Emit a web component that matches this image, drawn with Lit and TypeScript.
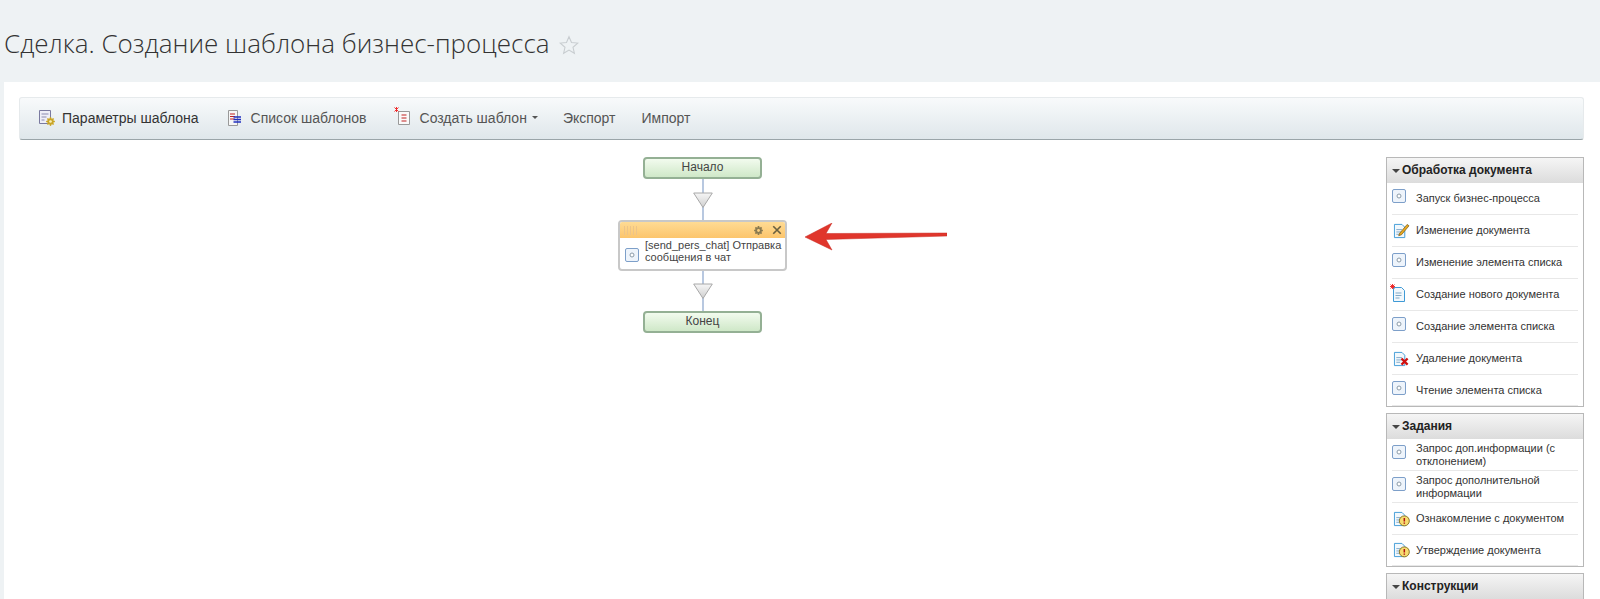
import { LitElement, html, css, svg } from "lit";
import { customElement } from "lit/decorators.js";

const activity = html`<svg class="ic act-ic" viewBox="0 0 14 14"><rect x=".5" y=".5" width="13" height="13" rx="1.5" fill="#eef4fb" stroke="#7d9fc9"/><circle cx="7" cy="7" r="2" fill="#fff" stroke="#8a9aa8"/></svg>`;
const docBase = svg`<path d="M1.500 1.500h8l3 3v11h-11z" fill="#f2f8fc" stroke="#3f9ad6"/><path d="M3.500 7h6M3.500 9.500h6M3.500 12h4" stroke="#7fa9c8"/>`;
const gearPath = (cx: number, cy: number, r: number, w: number, color: string, hole: string) => {
  const teeth = [0, 45, 90, 135].map(
    (a) => svg`<line x1=${cx - r - 1.2} y1=${cy} x2=${cx + r + 1.2} y2=${cy} stroke=${color} stroke-width=${w} transform="rotate(${a} ${cx} ${cy})"/>`
  );
  return svg`${teeth}<circle cx=${cx} cy=${cy} r=${r} fill=${color}/><circle cx=${cx} cy=${cy} r=${r * 0.42} fill=${hole}/>`;
};
const edit = html`<svg class="ic doc" viewBox="0 0 18 17">${docBase}<path d="M7 11l8-9.500 2 1.500-8 9.500-3 1z" fill="#e9a820" stroke="#6e5210" stroke-width=".7"/></svg>`;
const create = html`<svg class="ic doc star-doc" viewBox="0 0 18 18"><g transform="translate(2 2)">${docBase}</g><path d="M.5 .5l4 4M4.500 .5l-4 4M2.500 0v5M0 2.500h5" stroke="#ee1c1c" stroke-width=".9"/></svg>`;
const del = html`<svg class="ic doc" viewBox="0 0 18 17">${docBase}<path d="M9 8l6.500 6.500M15.500 8L9 14.500" stroke="#d01010" stroke-width="2.400"/></svg>`;
const warn = html`<svg class="ic doc" viewBox="0 0 18 17">${docBase}<circle cx="12" cy="10.500" r="5.300" fill="#f7dc70" stroke="#857020"/><path d="M12 7.500v3.700M12 12.300v1.300" stroke="#b01010" stroke-width="1.600"/></svg>`;

@customElement("app-root")
export class AppRoot extends LitElement {
  static styles = css`
    :host { display: block; height: 599px; overflow: hidden; background: #eef2f4; font-family: "Liberation Sans", Arial, sans-serif; color: #222; }
    .title { height: 82px; box-sizing: border-box; padding: 24px 0 0 4px; display: flex; align-items: flex-start; gap: 9px; font: 300 26px/38px "Open Sans", sans-serif; color: #333; }
    .star { width: 20px; height: 20px; margin-top: 11px; }
    .panel { margin-left: 4px; background: #fff; height: 517px; padding: 15px 16px 0 15px; }
    .toolbar { height: 43px; box-sizing: border-box; border: 1px solid #e6eaec; border-bottom: 1px solid #9aa5a9; border-radius: 3px; background: linear-gradient(#f8fafb, #dfe7eb); display: flex; align-items: center; padding: 0 0 2px 18px; font-size: 14px; color: #555; }
    .tb { display: flex; align-items: center; gap: 9px; margin-right: 27px; white-space: nowrap; }
    .tb.first { color: #333; gap: 6px; margin-right: 28px; }
    .tb.make { margin-right: 25px; }
    .tb.exp { margin-right: 26px; }
    .tb svg { width: 18px; height: 18px; }
    .tb .narrow { width: 15px; }
    .tb .mid { width: 17px; margin-top: -3px; }
    .caret { width: 0; height: 0; border: 3px solid transparent; border-top-color: #555; border-bottom: 0; margin-left: -4px; }
    .main { display: flex; padding-top: 17px; }
    .canvas { flex: 1; display: flex; flex-direction: column; align-items: center; font-size: 12px; }
    .flow { display: flex; flex-direction: column; align-items: center; }
    .node { width: 119px; height: 22px; box-sizing: border-box; border: 2px solid #94b094; border-radius: 4px; background: linear-gradient(#f2fbee, #cfe8c8); text-align: center; line-height: 17px; color: #444; font-size: 12px; }
    .link { width: 20px; display: block; }
    .act-wrap { position: relative; }
    .act { width: 169px; height: 51px; box-sizing: border-box; border: 2px solid #c8c8c8; border-radius: 4px; background: #fff; overflow: hidden; }
    .act-h { height: 16px; background: linear-gradient(#ffdb94, #fcc56c); display: flex; align-items: center; gap: 8px; padding: 0 3px 0 4px; }
    .act-h svg { width: 11px; height: 11px; }
    .act-h .close { width: 10px; height: 10px; }
    .grip { width: 15px; height: 9px; background: repeating-linear-gradient(90deg, #edc488 0 1px, transparent 1px 3px); margin-right: auto; }
    .act-b { display: flex; align-items: flex-start; gap: 6px; padding: 1px 0 0 5px; font-size: 11px; line-height: 12px; height: 30px; color: #444; white-space: nowrap; }
    .act-b .ic { width: 14px; height: 14px; flex: none; margin-top: 9px; }
    .arrow { position: absolute; left: 187px; top: 3px; width: 142px; height: 28px; }
    .side { width: 198px; flex: none; display: flex; flex-direction: column; gap: 6px; }
    .box { border: 1px solid #b8b8b8; background: #fff; }
    .box-h { height: 25px; box-sizing: border-box; background: linear-gradient(#f5f5f5, #dcdcdc); display: flex; align-items: center; gap: 2px; padding: 0 0 2px 5px; font: bold 12px "Liberation Sans", sans-serif; color: #222; }
    .tri { width: 0; height: 0; border: 4px solid transparent; border-top-color: #444; border-bottom: 0; margin-top: 2px; }
    .items { padding: 0 5px; }
    .item { height: 32px; box-sizing: border-box; border-bottom: 1px solid #e8e8e8; display: flex; align-items: center; font-size: 11px; line-height: 12.500px; color: #333; }
    .item:last-child { height: 31px; }
    .cell { width: 24px; flex: none; display: flex; align-items: center; }
    .cell .act-ic { width: 14px; height: 14px; margin-top: -5px; }
    .cell .doc { width: 17px; height: 16px; margin-left: 1px; }
    .cell .star-doc { width: 18px; height: 18px; margin: -4px 0 0 -2px; }
  `;

  private item(icon: unknown, text: string) {
    return html`<div class="item"><span class="cell">${icon}</span><span>${text}</span></div>`;
  }

  private link(h: number, top: number) {
    return html`<svg class="link" style="height:${h}px" viewBox="0 0 20 ${h}">
      <defs><linearGradient id="lg" x1="0" y1="0" x2="0" y2="1"><stop offset="0" stop-color="#f6f6f6"/><stop offset="1" stop-color="#cfcfcf"/></linearGradient></defs>
      <path d="M10 0v41" stroke="#b8c8e0" stroke-width="2"/><path d="M.7 ${top}h18.600L10 ${top + 14.5}z" fill="url(#lg)" stroke="#a8a8a8"/></svg>`;
  }

  render() {
    return html`
      <div class="title">
        <span>Сделка. Создание шаблона бизнес-процесса</span>
        <svg class="star" viewBox="0 0 24 24"><path d="M12 2l3 7 7.500.7-5.700 5 1.700 7.300-6.500-3.900-6.500 3.900 1.700-7.300-5.700-5 7.500-.7z" fill="none" stroke="#c8cdd0" stroke-width="1.300"/></svg>
      </div>
      <div class="panel">
        <div class="toolbar">
          <div class="tb first"><svg viewBox="0 0 18 18"><path d="M1.500 1.500h11v13h-11z" fill="#eeeef8" stroke="#7a7aa0"/><path d="M3.500 5h7M3.500 8h5M3.500 11h3" stroke="#8a8ab0"/>${gearPath(12.5, 12.5, 3.2, 1.4, "#c9a526", "#f7eeb8")}</svg>Параметры шаблона</div>
          <div class="tb"><svg class="narrow" viewBox="0 0 15 18"><path d="M1.500 1.500h9v15h-9z" fill="#f6f6f6" stroke="#999"/><path d="M3 5h5M3 7.500h5M3 10h5" stroke="#c02020"/><path d="M6.500 8h7.500M6.500 10.500h7.500M6.500 13h7.500" stroke="#2030c0" stroke-width="1.500"/></svg>Список шаблонов</div>
          <div class="tb make"><svg class="mid" viewBox="0 0 17 18"><path d="M4.500 4.500h11v13h-11z" fill="#fafafa" stroke="#999"/><path d="M7.500 8h5M7.500 11h5M7.500 14h5" stroke="#c02020"/><path d="M.5 .5l4 4M4.500 .5l-4 4M2.500 0v5" stroke="#ee1c1c" stroke-width=".9"/></svg>Создать шаблон<span class="caret"></span></div>
          <div class="tb exp">Экспорт</div>
          <div class="tb">Импорт</div>
        </div>
        <div class="main">
          <div class="canvas">
            <div class="flow">
              <div class="node">Начало</div>
              ${this.link(41, 14)}
              <div class="act-wrap">
                <div class="act">
                  <div class="act-h"><span class="grip"></span>
                    <svg viewBox="0 0 12 12">${gearPath(6, 6, 3.6, 1.8, "#8a7a50", "#fcd080")}</svg>
                    <svg class="close" viewBox="0 0 12 12"><path d="M1.500 1.500l9 9M10.500 1.500l-9 9" stroke="#6a6040" stroke-width="2"/></svg>
                  </div>
                  <div class="act-b">${activity}<span>[send_pers_chat] Отправка<br />сообщения в чат</span></div>
                </div>
                <svg class="arrow" viewBox="0 0 142 28"><path d="M0 14L27 0l-6 10.500L142 10v3L21 16.500l6 10.500z" fill="#e0362c" stroke="#c92a22" stroke-width=".5"/></svg>
              </div>
              ${this.link(40, 13)}
              <div class="node">Конец</div>
            </div>
          </div>
          <div class="side">
            <div class="box"><div class="box-h"><span class="tri"></span>Обработка документа</div><div class="items">
              ${this.item(activity, "Запуск бизнес-процесса")}
              ${this.item(edit, "Изменение документа")}
              ${this.item(activity, "Изменение элемента списка")}
              ${this.item(create, "Создание нового документа")}
              ${this.item(activity, "Создание элемента списка")}
              ${this.item(del, "Удаление документа")}
              ${this.item(activity, "Чтение элемента списка")}
            </div></div>
            <div class="box"><div class="box-h"><span class="tri"></span>Задания</div><div class="items">
              ${this.item(activity, "Запрос доп.информации (с отклонением)")}
              ${this.item(activity, "Запрос дополнительной информации")}
              ${this.item(warn, "Ознакомление с документом")}
              ${this.item(warn, "Утверждение документа")}
            </div></div>
            <div class="box"><div class="box-h"><span class="tri"></span>Конструкции</div></div>
          </div>
        </div>
      </div>
    `;
  }
}
